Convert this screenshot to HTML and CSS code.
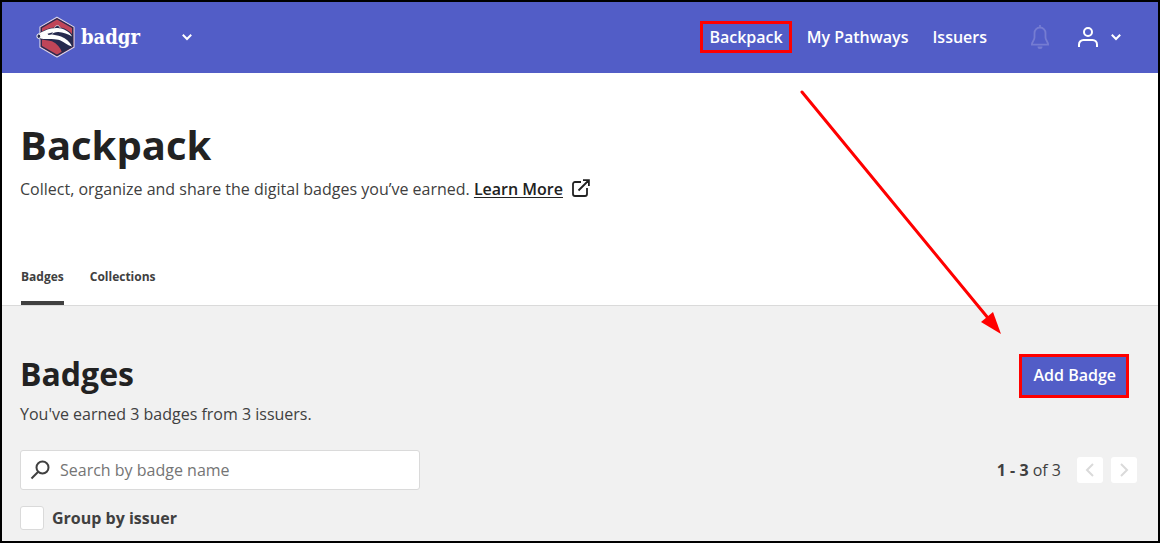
FILE: index.html
```html
<!DOCTYPE html>
<html lang="en">
<head>
<meta charset="utf-8">
<meta name="viewport" content="width=device-width, initial-scale=1">
<title>Backpack - Badgr</title>
<link rel="stylesheet" href="styles.css">
</head>
<body>
<div class="page">
  <header class="topbar">
    <a class="brand" href="#">
      <svg class="brand-mark" width="40" height="42" viewBox="0 0 40 42" aria-hidden="true">
        <path d="M21 1.200 38 11v20.200L21 41 4 31.200V11z" fill="#c04558" stroke="#d5d4ea" stroke-width="1.200"/>
        <path d="M21 2.700 36.700 11.700v18.700L21 39.400 5.300 30.400V11.700z" fill="none" stroke="#282b50" stroke-width="1.300"/>
        <path d="M2 18.500C7 14 13 11.800 18.500 11.500L21.500 9.300 24.500 11.500C30 12.500 34.500 15.500 37 19.500V30.200L26 36.600C24.500 31.500 21 27.500 16 25.200C11 24 6 24.200 2 22.500z" fill="#262a4e"/>
        <path d="M1.500 18.800C6 15.500 10 14 15 12.600C18 11.900 21 11.600 24 12.200C30 13.500 34 16.500 36 20.500C32 18 27 15.800 22 15.900C19 16 16.800 17 15.500 18.300C18 19.200 22 19.400 25 20.600C30 22.600 34 26 36 30.500C31 29 28 26 24 24.200C20 22.500 13 23.800 4.500 22.400z" fill="#fff"/>
        <path d="M11.500 17.800 17 16.300 15.500 18.600 12.500 19z" fill="#262a4e"/>
        <path d="M18.500 11.800C19 10 21 9.200 22.500 9.600L24.500 12.200" fill="#262a4e" stroke="#fff" stroke-width=".7"/>
        <ellipse cx="2.800" cy="20.200" rx="1.900" ry="2.300" fill="#262a4e" stroke="#fff" stroke-width="1"/>
      </svg>
      <span class="brand-name">badgr</span>
    </a>
    <button class="icon-button brand-menu" type="button" aria-label="Switch application">
      <svg width="12" height="8" viewBox="0 0 12 8" aria-hidden="true"><path d="M1.800 1.800 6 6l4.200-4.200" fill="none" stroke="#fff" stroke-width="2"/></svg>
    </button>
    <nav class="nav" aria-label="Main">
      <a class="nav-link nav-link-marked" href="#" aria-current="page">Backpack</a>
      <a class="nav-link" href="#">My Pathways</a>
      <a class="nav-link" href="#">Issuers</a>
    </nav>
    <button class="icon-button bell" type="button" aria-label="Notifications">
      <svg width="20" height="26" viewBox="0 0 20 26" fill="none" stroke="#757cd2" stroke-width="1.800" aria-hidden="true">
        <path d="M10 1v2.500M4.500 9A5.500 5.500 0 0 1 15.500 9V13.500C15.500 16.500 18.100 17.500 18.100 20.600H1.900C1.900 17.500 4.500 16.500 4.500 13.500z"/>
        <path d="M7.500 22.500h5a2.500 2.500 0 0 1-5 0z" fill="#757cd2" stroke="none"/>
      </svg>
    </button>
    <button class="icon-button account" type="button" aria-label="Account">
      <svg width="20" height="20" viewBox="0 0 20 20" fill="none" stroke="#fff" stroke-width="2" aria-hidden="true"><circle cx="10" cy="5" r="4"/><path d="M1 20v-2.500A4.500 4.500 0 0 1 5.500 13h9a4.500 4.500 0 0 1 4.500 4.500V20"/></svg>
      <svg width="12" height="8" viewBox="0 0 12 8" aria-hidden="true"><path d="M1.800 1.800 6 6l4.200-4.200" fill="none" stroke="#fff" stroke-width="2"/></svg>
    </button>
  </header>

  <section class="hero">
    <h1 class="title">Backpack</h1>
    <p class="text">Collect, organize and share the digital badges you’ve earned.
      <a class="learn" href="#">Learn More</a><svg class="external" width="18" height="18" viewBox="0 0 18 18" fill="none" stroke="#222" stroke-width="1.800" aria-hidden="true"><path d="M9 3H3a2 2 0 0 0-2 2v10a2 2 0 0 0 2 2h10a2 2 0 0 0 2-2V9M6.500 11.500 16 2M11 1.100h5.900V7"/></svg>
    </p>
  </section>
  <nav class="tabs" aria-label="Backpack views">
    <a class="tab tab-active" href="#" aria-current="page">Badges</a>
    <a class="tab" href="#">Collections</a>
  </nav>

  <main class="content">
    <div class="row heading-row">
      <div>
        <h2 class="subtitle">Badges</h2>
        <p class="text">You've earned 3 badges from 3 issuers.</p>
      </div>
      <button class="add" type="button">Add Badge</button>
    </div>
    <div class="row">
      <label class="search">
        <svg width="20" height="20" viewBox="0 0 20 20" fill="none" stroke="#404040" stroke-width="2" aria-hidden="true"><circle cx="12.500" cy="7.500" r="6"/><path d="M8.200 11.800 1.500 18.500"/></svg>
        <input class="search-input" type="search" placeholder="Search by badge name" aria-label="Search by badge name">
      </label>
      <div class="pager">
        <span><b class="range">1 - 3</b> of 3</span>
        <div class="pager-buttons">
          <button class="page-button" type="button" disabled aria-label="Previous page"><svg width="10" height="14" viewBox="0 0 10 14" aria-hidden="true"><path d="M8 1 2 7l6 6" fill="none" stroke="#dadada" stroke-width="2"/></svg></button>
          <button class="page-button" type="button" disabled aria-label="Next page"><svg width="10" height="14" viewBox="0 0 10 14" aria-hidden="true"><path d="m2 1 6 6-6 6" fill="none" stroke="#dadada" stroke-width="2"/></svg></button>
        </div>
      </div>
    </div>
    <label class="group"><input class="checkbox" type="checkbox">Group by issuer</label>
  </main>

  <svg class="arrow" width="204" height="248" viewBox="0 0 204 248" aria-hidden="true">
    <path d="M4 4 190 230" stroke="#f00" stroke-width="3" stroke-linecap="round"/>
    <path d="M203 246 183 234 195 224z" fill="#f00"/>
  </svg>
</div>
</body>
</html>
```

FILE: styles.css
```css
* {
  box-sizing: border-box;
}

body {
  margin: 0;
  background: #f1f1f1;
  color: #404040;
  font-family: "Open Sans", sans-serif;
  font-size: 16px;
  line-height: 24px;
}

h1, h2, p {
  margin: 0;
}

button, input {
  font: inherit;
}

svg {
  display: block;
  flex: none;
}

.page {
  position: relative;
  min-height: 100vh;
  border: 2px solid #000;
}

.topbar {
  display: flex;
  align-items: center;
  min-height: 71px;
  padding: 0 36px 2px 34px;
  background: #525dc7;
}

.brand {
  display: flex;
  align-items: center;
  gap: 5px;
  color: #fff;
  text-decoration: none;
}

.brand-name {
  font-family: "DejaVu Serif Condensed", "DejaVu Serif", serif;
  font-size: 20px;
  font-weight: 700;
}

.icon-button {
  display: flex;
  align-items: center;
  gap: 12px;
  padding: 0;
  border: 0;
  background: none;
}

.brand-menu {
  margin-left: 41px;
}

.nav {
  display: flex;
  align-items: center;
  gap: 24px;
  margin-left: auto;
}

.nav-link {
  color: #fff;
  font-weight: 600;
  text-decoration: none;
}

.nav-link-marked {
  margin-right: -9px;
  padding: 1px 6px;
  border: 3px solid #f00;
}

.bell {
  margin-left: 43px;
}

.account {
  margin-left: 28px;
}

.hero {
  padding: 48px 18px 68px;
  background: #fff;
}

.title {
  margin-bottom: 8px;
  color: #222;
  font-size: 40px;
  line-height: 48px;
}

.learn {
  color: #222;
  font-weight: 600;
  text-underline-offset: 2px;
}

.external {
  display: inline-block;
  margin-left: 9px;
  vertical-align: -2px;
}

.tabs {
  display: flex;
  gap: 26px;
  padding: 0 19px;
  border-bottom: 1px solid #dadada;
  background: #fff;
}

.tab {
  padding-bottom: 16px;
  border-bottom: 4px solid transparent;
  color: #404040;
  font-size: 12px;
  font-weight: 700;
  line-height: 16px;
  text-decoration: none;
}

.tab-active {
  border-color: #404040;
}

.content {
  padding: 48px 21px 11px 18px;
}

.row {
  display: flex;
  align-items: center;
  justify-content: space-between;
  gap: 24px;
}

.heading-row {
  align-items: flex-start;
  margin-bottom: 24px;
}

.subtitle {
  margin-bottom: 8px;
  color: #222;
  font-size: 32px;
  line-height: 40px;
}

.add {
  margin-right: 8px;
  padding: 6px 10px 8px 11px;
  border: 3px solid #f00;
  background: #525dc7;
  color: #fff;
  font-weight: 600;
}

.search {
  display: flex;
  align-items: center;
  gap: 10px;
  flex: 0 1 400px;
  height: 40px;
  padding: 0 9px;
  border: 1px solid #dadada;
  border-radius: 3px;
  background: #fff;
}

.search-input {
  flex: 1;
  min-width: 0;
  padding: 0;
  border: 0;
  outline: 0;
  background: none;
  color: #404040;
}

.search-input::placeholder {
  color: #757575;
}

.pager {
  display: flex;
  align-items: center;
  gap: 16px;
}

.range {
  font-weight: 700;
}

.pager-buttons {
  display: flex;
  gap: 8px;
}

.page-button {
  display: flex;
  align-items: center;
  justify-content: center;
  width: 26px;
  height: 26px;
  padding: 0;
  border: 0;
  border-radius: 3px;
  background: #fff;
}

.group {
  display: flex;
  align-items: center;
  gap: 8px;
  width: fit-content;
  margin-top: 16px;
  font-weight: 700;
}

.checkbox {
  width: 24px;
  height: 24px;
  margin: 0;
  border: 1px solid #dadada;
  border-radius: 3px;
  appearance: none;
  background: #fff;
}

.checkbox:checked {
  background: #525dc7;
}

/* Callout arrow laid over the page, pointing at the Add Badge button */
.arrow {
  position: absolute;
  top: 86px;
  right: 156px;
  pointer-events: none;
}
```
